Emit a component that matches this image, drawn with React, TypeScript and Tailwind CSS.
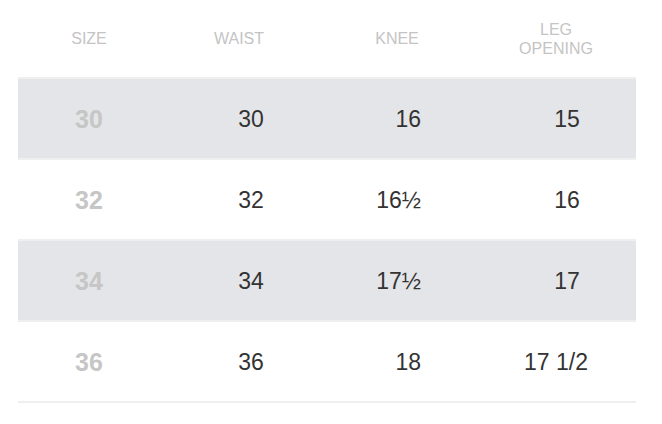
import React from 'react'

interface SizeRow {
  size: string
  waist: string
  knee: string
  leg: string
}

const rows: SizeRow[] = [
  { size: '30', waist: '30', knee: '16', leg: '15' },
  { size: '32', waist: '32', knee: '16½', leg: '16' },
  { size: '34', waist: '34', knee: '17½', leg: '17' },
  { size: '36', waist: '36', knee: '18', leg: '17 1/2' },
]

const cols = 'grid grid-cols-[142px_158px_158px_160px]'

const App: React.FC = () => (
  <div className="min-h-screen w-full bg-white px-[18px] font-['Liberation_Sans',Arial,sans-serif]">
    <div className="w-[618px]">
      <div className={`${cols} h-[77px] items-center text-center text-[16px] leading-[19px] text-[#c4c4c4]`}>
        <div>SIZE</div>
        <div>WAIST</div>
        <div>KNEE</div>
        <div>
          LEG
          <br />
          OPENING
        </div>
      </div>
      {rows.map((row, i) => (
        <div
          key={row.size}
          className={`${cols} h-[81px] items-center border-t-2 border-[#efefef] ${i % 2 === 0 ? 'bg-[#e4e5e8]' : 'bg-white'}`}
        >
          <div className="pt-[2px] text-center text-[25px] font-bold text-[#c6c6c6]">{row.size}</div>
          <div className="pl-[24px] pt-[2px] text-center text-[23px] text-[#333333]">{row.waist}</div>
          <div className="pr-[55px] pt-[2px] text-right text-[23px] text-[#333333]">{row.knee}</div>
          <div className={`pt-[2px] text-center text-[23px] text-[#333333] ${row.leg.length <= 2 ? 'pl-[22px]' : ''}`}>
            {row.leg}
          </div>
        </div>
      ))}
      <div className="h-0 border-t-2 border-[#efefef]" />
    </div>
  </div>
)

export default App
